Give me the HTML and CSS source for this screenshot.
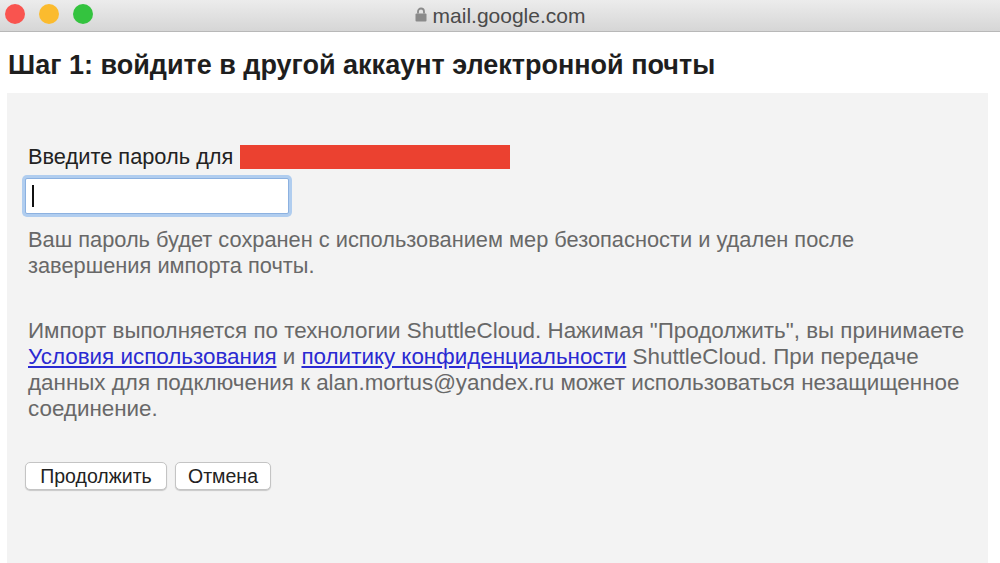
FILE: index.html
```html
<!DOCTYPE html>
<html lang="ru">
<head>
<meta charset="utf-8">
<title>mail.google.com</title>
<link rel="stylesheet" href="styles.css">
</head>
<body>
<div class="titlebar">
  <div class="lights">
    <span class="light red"></span>
    <span class="light yellow"></span>
    <span class="light green"></span>
  </div>
  <div class="url">
    <svg class="lock" width="12" height="15" viewBox="0 0 12 15"><path d="M3 6.5V4.5a3 3 0 0 1 6 0v2" fill="none" stroke="#8a8a8a" stroke-width="1.8"/><rect x="0.5" y="6.5" width="11" height="8" rx="1" fill="#8a8a8a"/></svg>
    <span class="url-text">mail.google.com</span>
  </div>
</div>
<div class="page">
  <h1 class="heading">Шаг 1: войдите в другой аккаунт электронной почты</h1>
  <div class="panel">
    <div class="label-row">
      <span class="label">Введите пароль для</span>
      <span class="redacted"></span>
    </div>
    <div class="field"><span class="caret"></span></div>
    <p class="help">Ваш пароль будет сохранен с использованием мер безопасности и удален после<br>завершения импорта почты.</p>
    <p class="terms">Импорт выполняется по технологии ShuttleCloud. Нажимая "Продолжить", вы принимаете<br><a href="#" class="link">Условия использования</a> и <a href="#" class="link">политику конфиденциальности</a> ShuttleCloud. При передаче<br>данных для подключения к alan.mortus@yandex.ru может использоваться незащищенное<br>соединение.</p>
    <div class="buttons">
      <button class="btn btn-continue">Продолжить</button>
      <button class="btn btn-cancel">Отмена</button>
    </div>
  </div>
</div>
</body>
</html>
```

FILE: styles.css
```css
html, body {
  margin: 0;
  padding: 0;
  background: #ffffff;
  font-family: "Liberation Sans", Arial, sans-serif;
  overflow: hidden;
}

.titlebar {
  height: 31px;
  border-bottom: 1px solid #b8b8b8;
  background: linear-gradient(#ececec, #d6d6d6);
  display: flex;
  align-items: center;
  position: relative;
}

.lights {
  display: flex;
  gap: 14px;
  padding-left: 5px;
  margin-top: -3px;
}

.light {
  width: 20px;
  height: 20px;
  border-radius: 50%;
  display: block;
}
.red { background: #f9544f; }
.yellow { background: #fbbb2e; }
.green { background: #34c33f; }

.url {
  position: absolute;
  left: 0;
  right: 0;
  top: 0;
  height: 31px;
  display: flex;
  align-items: center;
  justify-content: center;
  gap: 6px;
  padding-left: 0;
}

.lock {
  margin-top: -2px;
}

.url-text {
  font-size: 21px;
  color: #4a4a4a;
}

.page {
  padding: 0 12px 0 7px;
}

.heading {
  margin: 0;
  padding: 18px 0 0 1px;
  height: 43px;
  font-size: 27px;
  line-height: 30px;
  font-weight: bold;
  color: #1e1e1e;
  white-space: nowrap;
}

.panel {
  background: #f3f3f3;
  height: 480px;
  padding: 51px 0 0 21px;
  box-sizing: border-box;
}

.label-row {
  display: flex;
  align-items: center;
  height: 26px;
  gap: 7px;
}

.label {
  font-size: 21.8px;
  color: #222;
}

.redacted {
  display: block;
  width: 270px;
  height: 24px;
  background: #eb4130;
}

.field {
  margin: 8px 0 0 -3px;
  width: 256px;
  height: 34px;
  background: #fff;
  border: 1px solid #8cb1e0;
  border-radius: 2px;
  box-shadow: 0 0 0 3px #b0cdef;
  display: flex;
  align-items: center;
  padding-left: 6px;
  box-sizing: content-box;
}

.caret {
  width: 2px;
  height: 22px;
  background: #111;
}

.help {
  margin: 13px 0 0 0;
  font-size: 21.8px;
  line-height: 26px;
  color: #686868;
  white-space: nowrap;
}

.terms {
  margin: 39px 0 0 0;
  font-size: 22.4px;
  line-height: 26px;
  color: #686868;
  white-space: nowrap;
}

.link {
  color: #2a2ad2;
  text-decoration: underline;
}

.buttons {
  margin-top: 40px;
  display: flex;
  gap: 8px;
  margin-left: -3px;
}

.btn {
  font-family: "Liberation Sans", Arial, sans-serif;
  font-size: 19.5px;
  line-height: 20px;
  color: #222;
  height: 28px;
  background: #fff;
  border: 1px solid #c4c4c4;
  border-radius: 5px;
  box-shadow: 0 1px 1px rgba(0,0,0,0.18);
  padding: 0;
}
.btn-continue { width: 142px; }
.btn-cancel { width: 96px; }
```
